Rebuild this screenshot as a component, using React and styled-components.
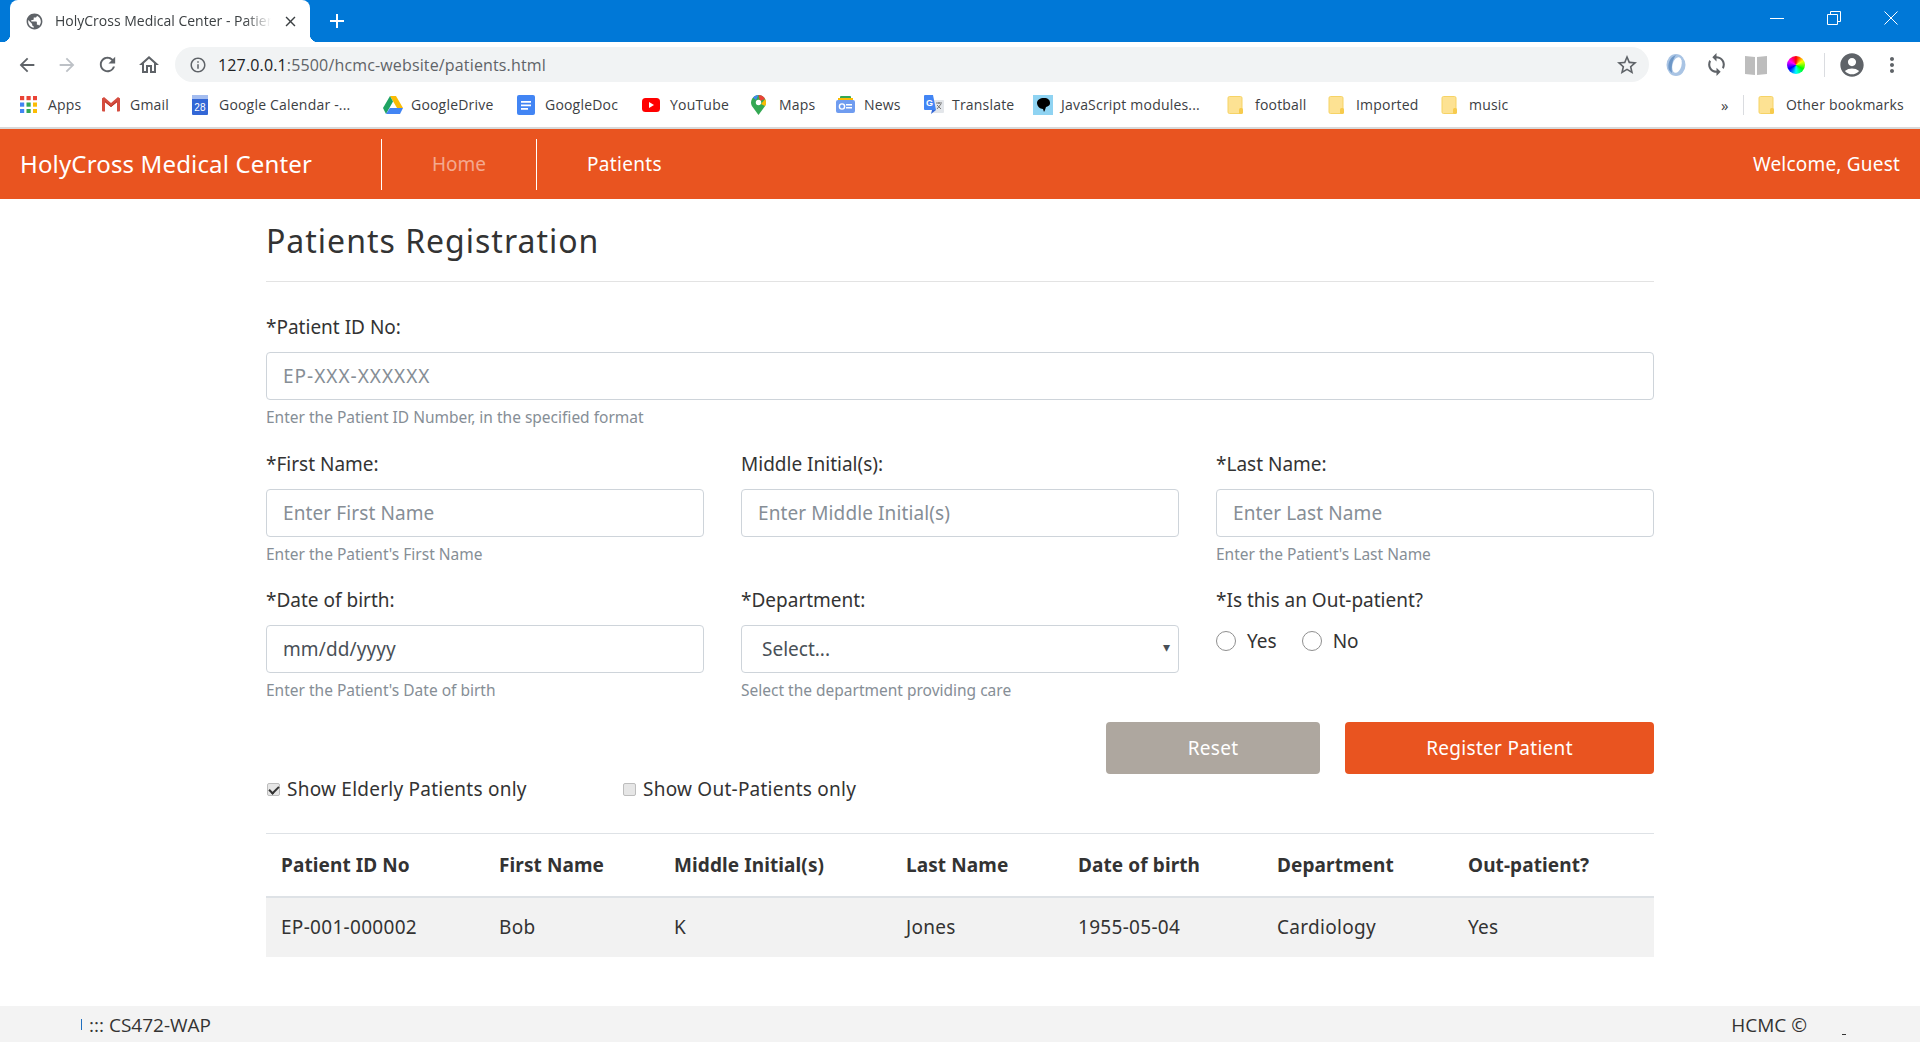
import React from "react";
import styled, { createGlobalStyle } from "styled-components";
import {
  MdArrowBack,
  MdArrowForward,
  MdRefresh,
  MdOutlineHome,
  MdInfoOutline,
  MdStarBorder,
  MdAccountCircle,
  MdMoreVert,
  MdPublic,
  MdClose,
  MdAdd,
  MdSync,
} from "react-icons/md";

const GlobalStyle = createGlobalStyle`
  html, body {
    margin: 0;
    padding: 0;
    background: #fff;
  }
  * {
    box-sizing: border-box;
  }
`;

const UI_FONT = `"Open Sans", "Noto Sans", sans-serif`;
const PAGE_FONT = `"Noto Sans", "Open Sans", sans-serif`;
const ORANGE = "#e95420";

const Folder = () => (
  <svg width="17" height="18" viewBox="0 0 17 18">
    <rect x="1" y="0.5" width="14" height="17" rx="1.5" fill="#fde293" stroke="#f6d365" />
    <rect x="12" y="12" width="4" height="6" rx="1.5" fill="#f7cb4d" />
  </svg>
);

const AppsIcon = () => {
  const colors = ["#ea4335", "#ea4335", "#ea4335", "#4285f4", "#34a853", "#fbbc04", "#4285f4", "#34a853", "#fbbc04"];
  return (
    <svg width="17" height="17" viewBox="0 0 17 17">
      {colors.map((c, i) => (
        <rect key={i} x={(i % 3) * 6.5} y={Math.floor(i / 3) * 6.5} width="4.2" height="4.2" fill={c} />
      ))}
    </svg>
  );
};

const GmailIcon = () => (
  <svg width="18" height="15" viewBox="0 0 18 15">
    <path d="M0 1.5h3v13H1a1 1 0 0 1-1-1z" fill="#d54c3f" />
    <path d="M18 1.5h-3v13h2a1 1 0 0 0 1-1z" fill="#d54c3f" />
    <path d="M0 1.5 L2 0 L9 6 L16 0 L18 1.5 L18 3 L9 10 L0 3z" fill="#d54c3f" />
    <path d="M3 4 L9 9 L15 4 L15 5 L9 10 L3 5z" fill="#b63524" />
  </svg>
);

const CalendarIcon = () => (
  <svg width="18" height="20" viewBox="0 0 18 20">
    <rect x="1" y="0" width="16" height="20" rx="1" fill="#3367d6" />
    <rect x="1" y="0" width="16" height="4" fill="#a4bdf0" />
    <text x="9" y="15.5" fontSize="10" fill="#fff" textAnchor="middle" fontFamily="Liberation Sans, sans-serif">28</text>
  </svg>
);

const DriveIcon = () => (
  <svg width="20" height="18" viewBox="0 0 20 18">
    <path d="M7 0h6l7 12h-6z" fill="#fbbc04" />
    <path d="M7 0l3 5.5L3 18 0 12z" fill="#1ea362" />
    <path d="M6.8 12H20l-3 6H3z" fill="#4285f4" />
  </svg>
);

const DocIcon = () => (
  <svg width="18" height="20" viewBox="0 0 18 20">
    <rect width="18" height="20" rx="2" fill="#4285f4" />
    <path d="M4 6h10v1.7H4zM4 9.5h10v1.7H4zM4 13h7v1.7H4z" fill="#fff" />
  </svg>
);

const YoutubeIcon = () => (
  <svg width="18" height="14" viewBox="0 0 18 14">
    <rect width="18" height="14" rx="3.5" fill="#f00" />
    <path d="M7 4l5 3-5 3z" fill="#fff" />
  </svg>
);

const MapsIcon = () => (
  <svg width="15" height="20" viewBox="0 0 15 20">
    <path d="M7.5 0a7.5 7.5 0 0 1 6.6 11L7.5 20 .9 11A7.5 7.5 0 0 1 7.5 0z" fill="#34a853" />
    <path d="M2 2.5A7.5 7.5 0 0 1 7.5 0L5 5z" fill="#4285f4" />
    <path d="M7.5 0a7.5 7.5 0 0 1 6.6 4L9 6z" fill="#ea4335" />
    <path d="M14.2 4a7.5 7.5 0 0 1-.1 7L10 9z" fill="#fbbc04" />
    <circle cx="7.5" cy="7.5" r="2.7" fill="#fff" />
  </svg>
);

const NewsIcon = () => (
  <svg width="19" height="17" viewBox="0 0 19 17">
    <rect x="4" y="0" width="11" height="6" rx="1" fill="#34a853" />
    <rect x="2" y="2" width="15" height="5" fill="#fbbc04" />
    <rect x="0" y="4" width="19" height="13" rx="2" fill="#6f9cf0" />
    <rect x="10" y="8" width="6" height="1.5" fill="#fff" />
    <rect x="10" y="11" width="6" height="1.5" fill="#fff" />
    <circle cx="6" cy="10.5" r="2.6" fill="none" stroke="#fff" strokeWidth="1.4" />
  </svg>
);

const TranslateIcon = () => (
  <svg width="20" height="20" viewBox="0 0 20 20">
    <rect x="8" y="5" width="12" height="13" rx="1" fill="#e3e6ea" />
    <path d="M12 8h6M15 7v2M13 14l4-5M13 10l4 4" stroke="#777" strokeWidth="1" fill="none" />
    <path d="M1 0h8l3 15H1a1 1 0 0 1-1-1V1a1 1 0 0 1 1-1z" fill="#4285f4" />
    <path d="M8 15l-1 4 5-4z" fill="#3367d6" />
    <text x="5.5" y="10.5" fontSize="9" fill="#fff" textAnchor="middle" fontWeight="700" fontFamily="Liberation Sans, sans-serif">G</text>
  </svg>
);

const JsIcon = () => (
  <svg width="20" height="20" viewBox="0 0 20 20">
    <rect width="20" height="20" fill="#8fd3f2" />
    <path d="M4 8c0-3 3-5 7-5s6 2 6 5-2 3-4 4l-1 3-1 2-1-3c-3 0-6-3-6-6z" fill="#000" />
  </svg>
);

const JsonIcon = () => (
  <svg width="22" height="24" viewBox="0 0 22 24">
    <ellipse cx="11" cy="12" rx="9.5" ry="11" fill="#a9c4e4" />
    <ellipse cx="12" cy="12" rx="4.5" ry="8" fill="#fff" transform="rotate(15 12 12)" />
    <path d="M4 17C2 11 5 4 11 2 8 6 6 12 7 20z" fill="#6d97c7" />
  </svg>
);

const BookIcon = () => (
  <svg width="22" height="20" viewBox="0 0 22 20">
    <path d="M0 1l10 1v18L0 19z" fill="#bdbdbd" />
    <path d="M22 1l-10 1v18l10-1z" fill="#bdbdbd" />
  </svg>
);

const bookmarks = [
  { Icon: AppsIcon, label: "Apps", w: 82 },
  { Icon: GmailIcon, label: "Gmail", w: 89 },
  { Icon: CalendarIcon, label: "Google Calendar -...", w: 192 },
  { Icon: DriveIcon, label: "GoogleDrive", w: 134 },
  { Icon: DocIcon, label: "GoogleDoc", w: 125 },
  { Icon: YoutubeIcon, label: "YouTube", w: 109 },
  { Icon: MapsIcon, label: "Maps", w: 85 },
  { Icon: NewsIcon, label: "News", w: 88 },
  { Icon: TranslateIcon, label: "Translate", w: 109 },
  { Icon: JsIcon, label: "JavaScript modules...", w: 194 },
  { Icon: Folder, label: "football", w: 101 },
  { Icon: Folder, label: "Imported", w: 113 },
  { Icon: Folder, label: "music", w: 100 },
];

const patients = [
  ["EP-001-000002", "Bob", "K", "Jones", "1955-05-04", "Cardiology", "Yes"],
];

const headers = ["Patient ID No", "First Name", "Middle Initial(s)", "Last Name", "Date of birth", "Department", "Out-patient?"];

const App = () => {
  return (
    <Page>
      <GlobalStyle />
      <TitleBar>
        <Tab>
          <MdPublic size={19} color="#5f6368" />
          <TabTitle>HolyCross Medical Center - Patients</TabTitle>
          <MdClose size={17} color="#3c4043" />
        </Tab>
        <NewTab>
          <MdAdd size={24} color="#fff" />
        </NewTab>
        <WindowButtons>
          <svg width="14" height="14" viewBox="0 0 14 14">
            <path d="M0 7.5h14" stroke="#fff" />
          </svg>
          <svg width="14" height="14" viewBox="0 0 14 14">
            <path d="M.5 3.5h10v10H.5zM3.5 3V.5h10v10H11" stroke="#fff" fill="none" />
          </svg>
          <svg width="14" height="14" viewBox="0 0 14 14">
            <path d="M.5.5l13 13M13.5.5l-13 13" stroke="#fff" fill="none" />
          </svg>
        </WindowButtons>
      </TitleBar>

      <Toolbar>
        <ToolIcons>
          <MdArrowBack size={22} color="#5f6368" />
          <MdArrowForward size={22} color="#bdc1c6" />
          <MdRefresh size={23} color="#5f6368" />
          <MdOutlineHome size={24} color="#5f6368" />
        </ToolIcons>
        <AddressBar>
          <MdInfoOutline size={18} color="#5f6368" />
          <Url>
            <strong>127.0.0.1</strong>:5500/hcmc-website/patients.html
          </Url>
          <MdStarBorder size={24} color="#5f6368" />
        </AddressBar>
        <Extensions>
          <ExtSlot $w={40}><JsonIcon /></ExtSlot>
          <ExtSlot $w={40}><MdSync size={25} color="#5f6368" /></ExtSlot>
          <ExtSlot $w={40}><BookIcon /></ExtSlot>
          <ExtSlot $w={40}><ColorWheel /></ExtSlot>
          <ExtSlot $w={16}><ToolDivider /></ExtSlot>
          <ExtSlot $w={40}><MdAccountCircle size={28} color="#5f6368" /></ExtSlot>
          <ExtSlot $w={40}><MdMoreVert size={24} color="#5f6368" /></ExtSlot>
        </Extensions>
      </Toolbar>

      <BookmarkBar>
        {bookmarks.map(({ Icon, label, w }) => (
          <Bookmark key={label} $w={w}>
            <BookmarkIcon>
              <Icon />
            </BookmarkIcon>
            {label}
          </Bookmark>
        ))}
        <Overflow>»</Overflow>
        <BookmarkDivider />
        <Bookmark $w={145}>
          <BookmarkIcon>
            <Folder />
          </BookmarkIcon>
          Other bookmarks
        </Bookmark>
      </BookmarkBar>

      <NavBar>
        <Brand>HolyCross Medical Center</Brand>
        <NavLink $muted>Home</NavLink>
        <NavLink>Patients</NavLink>
        <Welcome>Welcome, Guest</Welcome>
      </NavBar>

      <Main>
        <Title>Patients Registration</Title>
        <Rule />

        <Group $h={137}>
          <Label>*Patient ID No:</Label>
          <Input placeholder="EP-XXX-XXXXXX" $spaced />
          <Help>Enter the Patient ID Number, in the specified format</Help>
        </Group>

        <Row>
          <Group>
            <Label>*First Name:</Label>
            <Input placeholder="Enter First Name" />
            <Help>Enter the Patient's First Name</Help>
          </Group>
          <Group>
            <Label>Middle Initial(s):</Label>
            <Input placeholder="Enter Middle Initial(s)" />
          </Group>
          <Group>
            <Label>*Last Name:</Label>
            <Input placeholder="Enter Last Name" />
            <Help>Enter the Patient's Last Name</Help>
          </Group>
        </Row>

        <Row>
          <Group>
            <Label>*Date of birth:</Label>
            <Input defaultValue="mm/dd/yyyy" />
            <Help>Enter the Patient's Date of birth</Help>
          </Group>
          <Group>
            <Label>*Department:</Label>
            <SelectWrap>
              <Select defaultValue="">
                <option value="">Select...</option>
                <option>Cardiology</option>
              </Select>
            </SelectWrap>
            <Help>Select the department providing care</Help>
          </Group>
          <Group>
            <Label>*Is this an Out-patient?</Label>
            <RadioRow>
              <RadioLabel>
                <Radio type="radio" name="outpatient" />
                Yes
              </RadioLabel>
              <RadioLabel>
                <Radio type="radio" name="outpatient" />
                No
              </RadioLabel>
            </RadioRow>
          </Group>
        </Row>

        <Actions>
          <Button $bg="#aea79f" $w={214}>Reset</Button>
          <Button $bg={ORANGE} $w={309}>Register Patient</Button>
        </Actions>

        <Filters>
          <FilterLabel>
            <Check type="checkbox" defaultChecked />
            Show Elderly Patients only
          </FilterLabel>
          <FilterLabel>
            <Check type="checkbox" />
            Show Out-Patients only
          </FilterLabel>
        </Filters>

        <Table>
          <thead>
            <tr>
              {headers.map((h) => (
                <Th key={h}>{h}</Th>
              ))}
            </tr>
          </thead>
          <tbody>
            {patients.map((p) => (
              <StripedRow key={p[0]}>
                {p.map((v, i) => (
                  <Td key={i}>{v}</Td>
                ))}
              </StripedRow>
            ))}
          </tbody>
        </Table>
      </Main>

      <Footer>
        <FooterLeft>
          <Caret />
          ::: CS472-WAP
        </FooterLeft>
        <FooterRight>
          HCMC ©
          <Speck />
        </FooterRight>
      </Footer>
    </Page>
  );
};

export default App;

const Page = styled.div`
  min-height: 100vh;
  display: flex;
  flex-direction: column;
  font-family: ${PAGE_FONT};
  color: #333;
`;

const TitleBar = styled.div`
  height: 42px;
  background: #0078d7;
  display: flex;
  align-items: flex-end;
  padding-left: 10px;
`;

const Tab = styled.div`
  position: relative;
  width: 300px;
  height: 42px;
  background: #fff;
  border-radius: 8px 8px 0 0;
  display: flex;
  align-items: center;
  gap: 11px;
  padding: 0 11px 0 15px;

  &::before,
  &::after {
    content: "";
    position: absolute;
    bottom: 0;
    width: 8px;
    height: 8px;
    background: radial-gradient(circle at 0 0, #0078d7 8px, #fff 8.5px);
  }
  &::before {
    left: -8px;
  }
  &::after {
    right: -8px;
    transform: scaleX(-1);
  }
`;

const TabTitle = styled.div`
  flex: 1;
  overflow: hidden;
  white-space: nowrap;
  margin-top: -2px;
  font-family: ${UI_FONT};
  font-size: 14px;
  color: #3c4043;
  mask-image: linear-gradient(to right, #000 88%, transparent);
`;

const NewTab = styled.div`
  display: flex;
  align-items: center;
  height: 42px;
  margin-left: 15px;
`;

const WindowButtons = styled.div`
  margin-left: auto;
  display: flex;
  gap: 43px;
  height: 42px;
  padding: 11px 22px 0 0;
`;

const Toolbar = styled.div`
  height: 35px;
  margin-top: 5px;
  display: flex;
  align-items: center;
  background: #fff;
`;

const ToolIcons = styled.div`
  width: 175px;
  flex: none;
  display: flex;
  gap: 18px;
  padding-left: 16px;
  align-items: center;
`;

const AddressBar = styled.div`
  width: 1474px;
  flex: none;
  height: 35px;
  background: #f1f3f4;
  border-radius: 18px;
  display: flex;
  align-items: center;
  padding: 0 10px 0 14px;
`;

const Url = styled.div`
  flex: 1;
  margin-left: 11px;
  font-family: ${UI_FONT};
  font-size: 16px;
  letter-spacing: 0.15px;
  color: #5f6368;

  strong {
    font-weight: 400;
    color: #202124;
  }
`;

const Extensions = styled.div`
  flex: 1;
  display: flex;
  align-items: center;
  padding-left: 7px;
`;

const ExtSlot = styled.div`
  width: ${(p) => p.$w}px;
  flex: none;
  display: flex;
  align-items: center;
  justify-content: center;
`;

const ColorWheel = styled.div`
  width: 18px;
  height: 18px;
  border-radius: 50%;
  background: conic-gradient(#f00, #ff0, #0f0, #0ff, #00f, #f0f, #f00);
`;

const ToolDivider = styled.div`
  width: 1px;
  height: 24px;
  background: #dadce0;
`;

const BookmarkBar = styled.div`
  height: 47px;
  display: flex;
  align-items: center;
  padding-left: 20px;
  border-bottom: 2px solid #d9d9d9;
  font-family: ${UI_FONT};
  font-size: 14px;
  letter-spacing: 0.2px;
  color: #3c4043;
`;

const Bookmark = styled.div`
  width: ${(p) => p.$w}px;
  flex: none;
  display: flex;
  align-items: center;
  white-space: nowrap;
`;

const BookmarkIcon = styled.span`
  width: 28px;
  height: 20px;
  flex: none;
  display: flex;
  align-items: center;
`;

const Overflow = styled.div`
  margin-left: 180px;
  width: 22px;
  font-size: 15px;
`;

const BookmarkDivider = styled.div`
  width: 1px;
  height: 20px;
  background: #dadce0;
  margin-right: 14px;
`;

const NavBar = styled.nav`
  height: 70px;
  background: ${ORANGE};
  display: flex;
  align-items: center;
  padding: 0 20px;
  color: #fff;
`;

const Brand = styled.div`
  width: 361px;
  margin-top: -2px;
  font-size: 24px;
  letter-spacing: 0.15px;
`;

const NavLink = styled.a`
  height: 51px;
  display: flex;
  align-items: center;
  padding: 0 50px;
  border-left: 1px solid #fff;
  font-size: 19px;
  letter-spacing: ${(p) => (p.$muted ? "0" : "0.3px")};
  color: ${(p) => (p.$muted ? "rgba(255, 255, 255, 0.5)" : "#fff")};
`;

const Welcome = styled.div`
  margin-left: auto;
  font-size: 19px;
  letter-spacing: 0.2px;
`;

const Main = styled.main`
  width: 1388px;
  margin-left: 266px;
  padding-top: 20px;
`;

const Title = styled.h2`
  margin: 0;
  height: 44px;
  line-height: 44px;
  font-size: 32px;
  font-weight: 400;
  letter-spacing: 1px;
`;

const Rule = styled.hr`
  margin: 18px 0 30px;
  border: 0;
  border-top: 1px solid #e3e3e3;
`;

const Group = styled.div`
  display: flex;
  flex-direction: column;
  min-width: 0;
  height: ${(p) => p.$h || 136}px;
`;

const Row = styled.div`
  display: grid;
  grid-template-columns: repeat(3, 438px);
  column-gap: 37px;
`;

const Label = styled.label`
  height: 30px;
  line-height: 30px;
  margin-bottom: 10px;
  font-size: 19px;
`;

const Input = styled.input`
  height: 48px;
  width: 100%;
  padding: 0 16px;
  border: 1px solid #ced4da;
  border-radius: 4px;
  background: #fff;
  font-family: ${PAGE_FONT};
  font-size: 19px;
  letter-spacing: ${(p) => (p.$spaced ? "1px" : "0.1px")};
  color: #495057;

  &::placeholder {
    color: #868e96;
    opacity: 1;
  }
`;

const Help = styled.small`
  margin-top: 4px;
  height: 26px;
  line-height: 26px;
  font-size: 15.5px;
  color: #868e96;
`;

const SelectWrap = styled.div`
  position: relative;

  &::after {
    content: "▾";
    position: absolute;
    right: 9px;
    top: 12px;
    font-size: 14px;
    color: #495057;
  }
`;

const Select = styled.select`
  appearance: none;
  width: 100%;
  height: 48px;
  padding: 0 20px;
  border: 1px solid #ced4da;
  border-radius: 4px;
  background: #fff;
  font-family: ${PAGE_FONT};
  font-size: 19px;
  color: #495057;
`;

const RadioRow = styled.div`
  display: flex;
  gap: 25px;
  margin-top: 1px;
`;

const RadioLabel = styled.label`
  display: flex;
  align-items: center;
  gap: 11px;
  height: 30px;
  font-size: 19px;
  line-height: 30px;
`;

const Radio = styled.input`
  appearance: none;
  width: 20px;
  height: 20px;
  margin: 0;
  border: 1px solid #8f8f8f;
  border-radius: 50%;
  background: #fff;
`;

const Actions = styled.div`
  display: flex;
  justify-content: flex-end;
  gap: 25px;
  margin-top: 1px;
`;

const Button = styled.button`
  width: ${(p) => p.$w}px;
  height: 52px;
  border: 0;
  border-radius: 4px;
  background: ${(p) => p.$bg};
  color: #fff;
  font-family: ${PAGE_FONT};
  font-size: 19px;
  letter-spacing: 0.3px;
`;

const Filters = styled.div`
  display: grid;
  grid-template-columns: 356px 1fr;
  height: 30px;
`;

const FilterLabel = styled.label`
  display: flex;
  align-items: center;
  gap: 7px;
  font-size: 19px;
  letter-spacing: 0.24px;
  line-height: 30px;
`;

const Check = styled.input`
  position: relative;
  appearance: none;
  width: 13px;
  height: 13px;
  margin: 1px 0 0 1px;
  border: 1px solid #bdbdbd;
  border-radius: 2px;
  background: #e6e6e6;

  &:checked::after {
    content: "";
    position: absolute;
    left: 3px;
    top: 0;
    width: 4px;
    height: 8px;
    border: solid #333;
    border-width: 0 2px 2px 0;
    transform: rotate(45deg);
  }
`;

const Table = styled.table`
  width: 100%;
  margin-top: 29px;
  border-collapse: collapse;
  table-layout: fixed;
  border-top: 1px solid #dee2e6;
`;

const Th = styled.th`
  height: 63px;
  padding: 0 15px;
  border-bottom: 2px solid #dee2e6;
  text-align: left;
  font-size: 19px;
  font-weight: 700;
  letter-spacing: 0.1px;
  white-space: nowrap;

  &:nth-child(1) { width: 218px; }
  &:nth-child(2) { width: 175px; }
  &:nth-child(3) { width: 232px; }
  &:nth-child(4) { width: 172px; }
  &:nth-child(5) { width: 199px; }
  &:nth-child(6) { width: 191px; }
`;

const StripedRow = styled.tr`
  background: #f2f2f2;
`;

const Td = styled.td`
  height: 60px;
  padding: 0 15px;
  font-size: 19px;
  letter-spacing: 0.3px;
`;

const Footer = styled.footer`
  margin-top: auto;
  height: 36px;
  background: #f3f3f3;
  display: flex;
  align-items: center;
  justify-content: space-between;
  padding: 1px 74px 0 81px;
  font-family: ${UI_FONT};
  font-size: 19px;
  color: #333;
`;

const FooterLeft = styled.div`
  display: flex;
  align-items: center;
  white-space: pre;
`;

const Caret = styled.span`
  width: 1px;
  height: 11px;
  margin-right: 7px;
  background: #1f6fbf;
`;

const FooterRight = styled.div`
  display: flex;
  align-items: center;
`;

const Speck = styled.span`
  width: 4px;
  height: 1px;
  margin: 20px 0 0 35px;
  background: #333;
`;
